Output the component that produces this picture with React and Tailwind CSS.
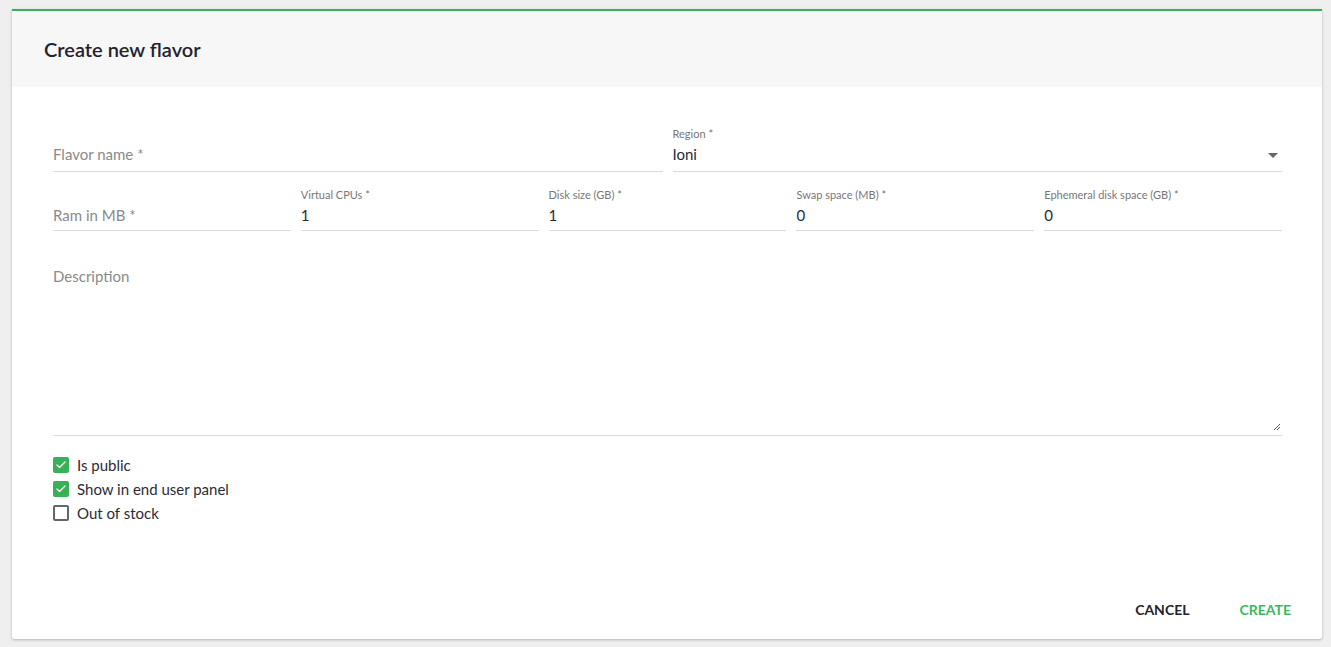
import { Check } from 'lucide-react';

const font = { fontFamily: 'Lato, "Open Sans", Arial, sans-serif' };

function Field({ label, value, placeholder, className = '', select, tall }) {
  return (
    <div className={`flex flex-col ${className}`}>
      <div className="h-[13px] text-[11px] leading-[13px] text-[#777]">{label}</div>
      <div className={`relative flex items-center border-b border-[#dcdcdc] ${tall ? 'h-[32px] pb-[2px]' : 'h-[30px]'}`}>
        {value ? (
          <span className="text-[15px] text-[#1d2b3a]">{value}</span>
        ) : (
          <span className="text-[15px] text-[#8a8a8a]">{placeholder}</span>
        )}
        {select && (
          <span className="absolute right-[4px] top-[13px] w-0 h-0 border-l-[5px] border-r-[5px] border-t-[5px] border-l-transparent border-r-transparent border-t-[#666]" />
        )}
      </div>
    </div>
  );
}

function Box({ checked, label }) {
  return (
    <label className="flex items-center gap-[8px] h-[24px]">
      {checked ? (
        <span className="w-[16px] h-[16px] rounded-[2px] bg-[#38b057] flex items-center justify-center">
          <Check className="w-[12px] h-[12px] text-white" strokeWidth={2.5} />
        </span>
      ) : (
        <span className="w-[16px] h-[16px] rounded-[2px] border-2 border-[#666]" />
      )}
      <span className="text-[15px] text-[#2b2b36]">{label}</span>
    </label>
  );
}

export default function App() {
  return (
    <div className="min-h-[647px] bg-[#efefef] pt-[9px] pl-[12px]" style={font}>
      <div className="w-[1310px] h-[630px] bg-white border-t-2 border-[#3aae56] shadow-[0_1px_3px_rgba(0,0,0,0.25)] rounded-b-[3px] flex flex-col">
        <div className="h-[76px] bg-[#f7f7f7] flex items-center px-[32px]">
          <h1 className="text-[20px] font-semibold text-[#23232d]">Create new flavor</h1>
        </div>
        <div className="flex-1 flex flex-col pl-[41px] pr-[40px] pt-[40px]">
          <div className="flex gap-[10px]">
            <Field className="flex-1" placeholder="Flavor name *" tall />
            <Field className="flex-1" label="Region *" value="Ioni" select tall />
          </div>
          <div className="flex gap-[10px] mt-[16px]">
            <Field className="flex-1" placeholder="Ram in MB *" />
            <Field className="flex-1" label="Virtual CPUs *" value="1" />
            <Field className="flex-1" label="Disk size (GB) *" value="1" />
            <Field className="flex-1" label="Swap space (MB) *" value="0" />
            <Field className="flex-1" label="Ephemeral disk space (GB) *" value="0" />
          </div>
          <div className="relative mt-[33px] h-[172px] border-b border-[#dcdcdc]">
            <span className="text-[15px] text-[#8a8a8a]">Description</span>
            <svg className="absolute right-[1px] bottom-[4px]" width="8" height="8" viewBox="0 0 8 8">
              <path d="M1 7L7 1M4 7L7 4" stroke="#555" strokeWidth="1" />
            </svg>
          </div>
          <div className="flex flex-col mt-[17px]">
            <Box checked label="Is public" />
            <Box checked label="Show in end user panel" />
            <Box label="Out of stock" />
          </div>
          <div className="flex-1" />
          <div className="flex justify-end gap-[50px] pb-[19px] mr-[-9px]">
            <button className="text-[14px] font-bold text-[#23232d]">CANCEL</button>
            <button className="text-[14px] font-bold text-[#3cb860]">CREATE</button>
          </div>
        </div>
      </div>
    </div>
  );
}
